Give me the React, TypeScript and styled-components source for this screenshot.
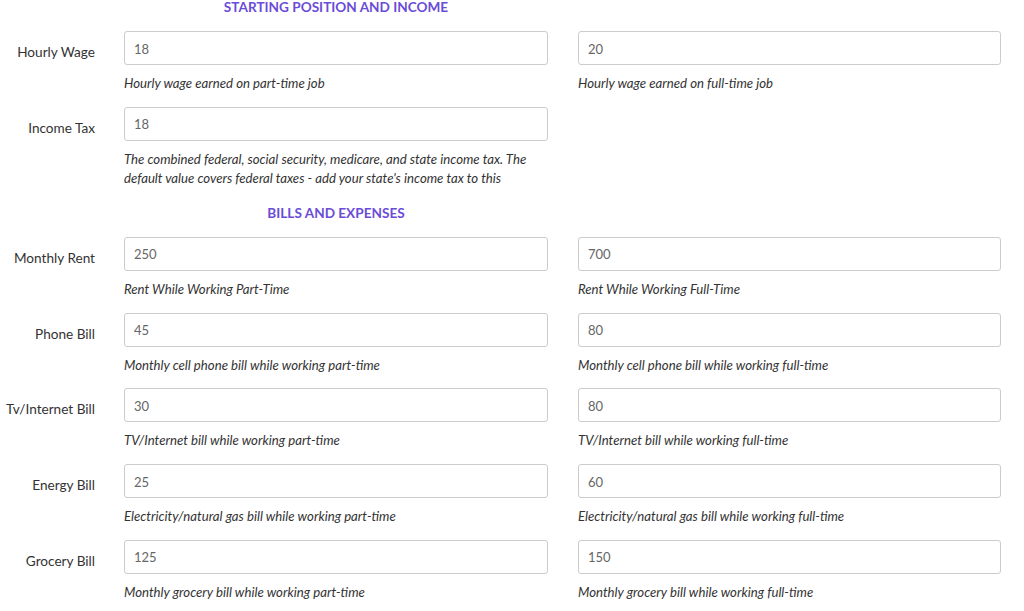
import React from 'react';
import styled, { createGlobalStyle } from 'styled-components';

const GlobalStyle = createGlobalStyle`
    html, body {
        margin: 0;
        padding: 0;
        background: #ffffff;
        font-family: Lato, "Open Sans", "Liberation Sans", sans-serif;
        color: #333333;
    }
`;

interface Field {
    label: string;
    part: string;
    full?: string;
    partHelp: string;
    fullHelp?: string;
}

const income: Field[] = [
    { label: 'Hourly Wage', part: '18', full: '20', partHelp: 'Hourly wage earned on part-time job', fullHelp: 'Hourly wage earned on full-time job' },
    { label: 'Income Tax', part: '18', partHelp: "The combined federal, social security, medicare, and state income tax. The default value covers federal taxes - add your state's income tax to this" },
];

const bills: Field[] = [
    { label: 'Monthly Rent', part: '250', full: '700', partHelp: 'Rent While Working Part-Time', fullHelp: 'Rent While Working Full-Time' },
    { label: 'Phone Bill', part: '45', full: '80', partHelp: 'Monthly cell phone bill while working part-time', fullHelp: 'Monthly cell phone bill while working full-time' },
    { label: 'Tv/Internet Bill', part: '30', full: '80', partHelp: 'TV/Internet bill while working part-time', fullHelp: 'TV/Internet bill while working full-time' },
    { label: 'Energy Bill', part: '25', full: '60', partHelp: 'Electricity/natural gas bill while working part-time', fullHelp: 'Electricity/natural gas bill while working full-time' },
    { label: 'Grocery Bill', part: '125', full: '150', partHelp: 'Monthly grocery bill while working part-time', fullHelp: 'Monthly grocery bill while working full-time' },
];

const Page = styled.div`
    width: 1024px;
    height: 611px;
    overflow: hidden;
`;

const SectionTitle = styled.h3<{ $first?: boolean }>`
    margin: ${props => props.$first ? '0' : '18px'} 0 17px 124px;
    width: 424px;
    text-align: center;
    font-size: 13.6px;
    line-height: 14px;
    font-weight: 700;
    color: #6a4cd8;
    text-transform: uppercase;
`;

const Row = styled.div`
    display: grid;
    grid-template-columns: 95px 424px 424px;
    column-gap: 29px;
    margin-bottom: 13.75px;

    & > div:last-child {
        margin-left: 1px;
    }
`;

const Label = styled.label`
    padding-top: 13px;
    text-align: right;
    font-size: 13.6px;
    line-height: 16px;
    color: #333333;
    white-space: nowrap;
`;

const Group = styled.div`
    display: flex;
    flex-direction: column;
`;

const Input = styled.input`
    box-sizing: border-box;
    width: 100%;
    height: 34px;
    padding: 1px 9px 0;
    border: 1px solid #cccccc;
    border-radius: 3px;
    font-family: Lato, "Open Sans", "Liberation Sans", sans-serif;
    font-size: 13px;
    color: #666666;
    background: #ffffff;
    outline: none;
`;

const Help = styled.p`
    margin: 9px 0 0;
    font-size: 13.2px;
    line-height: 19px;
    font-style: italic;
    color: #333333;
`;

const FieldRow: React.FC<{ field: Field }> = ({ field }) => (
    <Row>
        <Label>{field.label}</Label>
        <Group>
            <Input defaultValue={field.part} />
            <Help>{field.partHelp}</Help>
        </Group>
        {field.full !== undefined ? (
            <Group>
                <Input defaultValue={field.full} />
                <Help>{field.fullHelp}</Help>
            </Group>
        ) : <div />}
    </Row>
);

export default function App() {
    return (
        <Page>
            <GlobalStyle />
            <SectionTitle $first>Starting Position and Income</SectionTitle>
            {income.map(f => <FieldRow key={f.label} field={f} />)}
            <SectionTitle>Bills and Expenses</SectionTitle>
            {bills.map(f => <FieldRow key={f.label} field={f} />)}
        </Page>
    );
}
